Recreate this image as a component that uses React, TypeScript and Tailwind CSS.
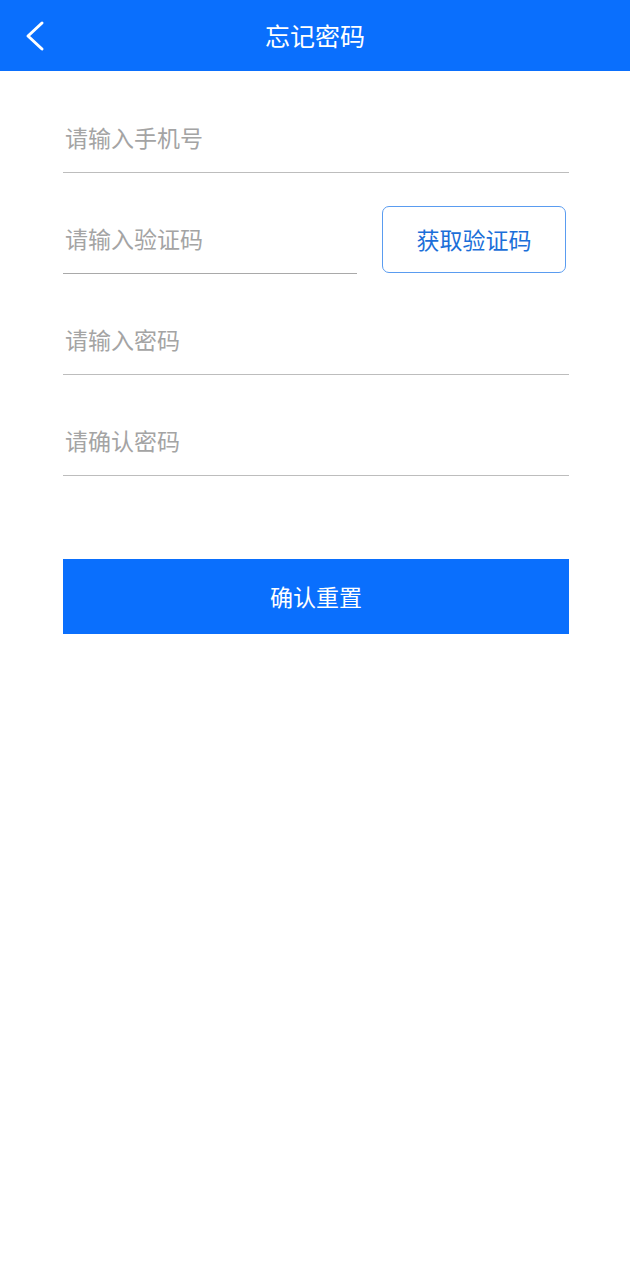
import { useState } from 'react';

const font = { fontFamily: '"Noto Sans CJK SC", "Noto Sans", sans-serif' };

function Field({ placeholder, type = 'text' }: { placeholder: string; type?: string }) {
  return (
    <div className="h-[101px] flex items-end border-b border-[#bdbdbd]">
      <input
        type={type}
        placeholder={placeholder}
        className="w-full h-[30px] mb-[20px] pl-[2px] text-[23px] leading-[30px] text-[#333] placeholder:text-[#a4a4a4] outline-none bg-transparent"
      />
    </div>
  );
}

export default function App() {
  const [sent, setSent] = useState(false);

  return (
    <div className="min-h-[1280px] bg-white" style={font}>
      {/* 顶部栏 */}
      <div className="relative h-[71px] bg-[#0a6ffd] flex items-center justify-center">
        <button className="absolute left-[15px] top-[14px] w-[40px] h-[44px] flex items-center justify-center">
          <svg width="22" height="32" viewBox="0 0 22 32" fill="none">
            <path d="M18 3 L4 16 L18 29" stroke="white" strokeWidth="3" strokeLinecap="round" strokeLinejoin="round" />
          </svg>
        </button>
        <h1 className="text-white text-[25px] leading-none">忘记密码</h1>
      </div>

      {/* 表单 */}
      <div className="mt-[1px] px-[63px] mr-[-2px]">
        <Field placeholder="请输入手机号" type="tel" />

        <div className="flex items-end h-[101px]">
          <div className="w-[294px] h-[101px] flex items-end border-b border-[#a9a9a9]">
            <input
              placeholder="请输入验证码"
              className="w-full h-[30px] mb-[20px] pl-[2px] text-[23px] leading-[30px] text-[#333] placeholder:text-[#a4a4a4] outline-none bg-transparent"
            />
          </div>
          <button
            onClick={() => setSent(true)}
            className="ml-[25px] mb-[1px] w-[184px] h-[67px] rounded-[7px] border border-[#5a9cf0] text-[#1b6fd9] text-[23px] leading-none"
          >
            {sent ? '已发送' : '获取验证码'}
          </button>
        </div>

        <Field placeholder="请输入密码" type="password" />
        <Field placeholder="请确认密码" type="password" />

        <button className="mt-[83px] w-full h-[75px] bg-[#0a6ffd] text-white text-[23px] leading-none">
          确认重置
        </button>
      </div>
    </div>
  );
}
